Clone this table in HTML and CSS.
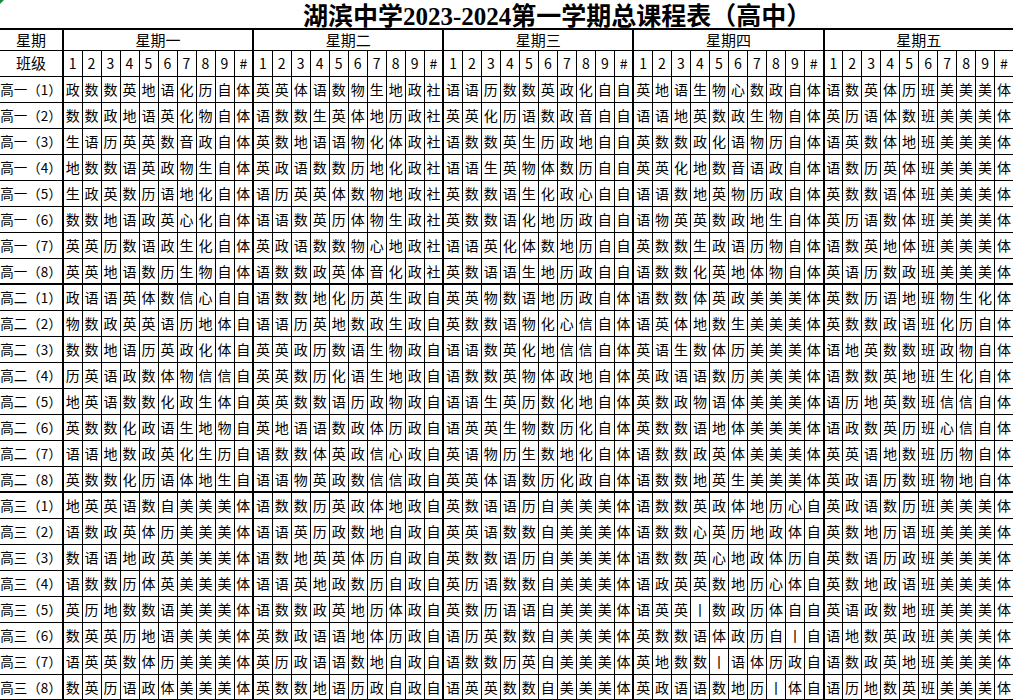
FILE: index.html
```html
<!DOCTYPE html>
<html lang="zh-CN">
<head>
<meta charset="utf-8">
<title>湖滨中学2023-2024第一学期总课程表（高中）</title>
<link rel="stylesheet" href="styles.css">
</head>
<body>
<div class="mark"></div>
<div class="title">湖滨中学2023-2024第一学期总课程表（高中）</div>
<table class="tt">
<colgroup><col class="c0"><col span="50" class="c"></colgroup>
<tr class="h1"><th>星期</th><th colspan="10">星期一</th><th colspan="10">星期二</th><th colspan="10">星期三</th><th colspan="10">星期四</th><th colspan="10">星期五</th></tr>
<tr class="h2"><th class="cls">班级</th>
<th>1<th>2<th>3<th>4<th>5<th>6<th>7<th>8<th>9<th>#
<th>1<th>2<th>3<th>4<th>5<th>6<th>7<th>8<th>9<th>#
<th>1<th>2<th>3<th>4<th>5<th>6<th>7<th>8<th>9<th>#
<th>1<th>2<th>3<th>4<th>5<th>6<th>7<th>8<th>9<th>#
<th>1<th>2<th>3<th>4<th>5<th>6<th>7<th>8<th>9<th>#
</tr>
<tr><th><div class="lab">高一（1）</div></th>
<td>政<td>数<td>数<td>英<td>地<td>语<td>化<td>历<td>自<td>体
<td>英<td>英<td>体<td>语<td>数<td>物<td>生<td>地<td>政<td>社
<td>语<td>语<td>历<td>数<td>数<td>英<td>政<td>化<td>自<td>自
<td>英<td>地<td>语<td>生<td>物<td>心<td>数<td>政<td>自<td>体
<td>语<td>数<td>英<td>体<td>历<td>班<td>美<td>美<td>美<td>体
</tr>
<tr><th><div class="lab">高一（2）</div></th>
<td>数<td>数<td>政<td>地<td>语<td>英<td>化<td>物<td>自<td>体
<td>语<td>数<td>数<td>生<td>英<td>体<td>地<td>历<td>政<td>社
<td>英<td>英<td>化<td>历<td>语<td>数<td>政<td>音<td>自<td>自
<td>语<td>语<td>地<td>英<td>数<td>政<td>生<td>物<td>自<td>体
<td>英<td>历<td>语<td>体<td>数<td>班<td>美<td>美<td>美<td>体
</tr>
<tr><th><div class="lab">高一（3）</div></th>
<td>生<td>语<td>历<td>英<td>英<td>数<td>音<td>政<td>自<td>体
<td>英<td>数<td>地<td>语<td>语<td>物<td>化<td>体<td>政<td>社
<td>语<td>数<td>数<td>英<td>生<td>历<td>政<td>地<td>自<td>自
<td>英<td>数<td>数<td>政<td>化<td>语<td>物<td>历<td>自<td>体
<td>语<td>英<td>数<td>体<td>地<td>班<td>美<td>美<td>美<td>体
</tr>
<tr><th><div class="lab">高一（4）</div></th>
<td>地<td>数<td>数<td>语<td>英<td>政<td>物<td>生<td>自<td>体
<td>英<td>政<td>语<td>数<td>数<td>历<td>地<td>化<td>政<td>社
<td>语<td>语<td>生<td>英<td>物<td>体<td>数<td>历<td>自<td>自
<td>英<td>英<td>化<td>地<td>数<td>音<td>语<td>政<td>自<td>体
<td>语<td>数<td>历<td>英<td>体<td>班<td>美<td>美<td>美<td>体
</tr>
<tr><th><div class="lab">高一（5）</div></th>
<td>生<td>政<td>英<td>数<td>历<td>语<td>地<td>化<td>自<td>体
<td>语<td>历<td>英<td>英<td>体<td>数<td>物<td>地<td>政<td>社
<td>英<td>数<td>数<td>语<td>生<td>化<td>政<td>心<td>自<td>自
<td>语<td>语<td>数<td>地<td>英<td>物<td>历<td>政<td>自<td>体
<td>英<td>数<td>数<td>语<td>体<td>班<td>美<td>美<td>美<td>体
</tr>
<tr><th><div class="lab">高一（6）</div></th>
<td>数<td>数<td>地<td>语<td>政<td>英<td>心<td>化<td>自<td>体
<td>语<td>语<td>数<td>英<td>历<td>体<td>物<td>生<td>政<td>社
<td>英<td>数<td>数<td>语<td>化<td>地<td>历<td>政<td>自<td>自
<td>语<td>物<td>英<td>英<td>数<td>政<td>地<td>生<td>自<td>体
<td>英<td>历<td>语<td>数<td>体<td>班<td>美<td>美<td>美<td>体
</tr>
<tr><th><div class="lab">高一（7）</div></th>
<td>英<td>英<td>历<td>数<td>语<td>政<td>生<td>化<td>自<td>体
<td>英<td>政<td>语<td>数<td>数<td>物<td>心<td>地<td>政<td>社
<td>语<td>语<td>英<td>化<td>体<td>数<td>地<td>历<td>自<td>自
<td>英<td>数<td>数<td>生<td>政<td>语<td>历<td>物<td>自<td>体
<td>语<td>数<td>英<td>地<td>体<td>班<td>美<td>美<td>美<td>体
</tr>
<tr><th><div class="lab">高一（8）</div></th>
<td>英<td>英<td>地<td>语<td>数<td>历<td>生<td>物<td>自<td>体
<td>语<td>数<td>数<td>政<td>英<td>体<td>音<td>化<td>政<td>社
<td>英<td>数<td>语<td>语<td>生<td>地<td>历<td>政<td>自<td>自
<td>语<td>数<td>数<td>化<td>英<td>地<td>体<td>物<td>自<td>体
<td>英<td>语<td>历<td>数<td>政<td>班<td>美<td>美<td>美<td>体
</tr>
<tr class="g"><th><div class="lab">高二（1）</div></th>
<td>政<td>语<td>语<td>英<td>体<td>数<td>信<td>心<td>自<td>自
<td>语<td>数<td>数<td>地<td>化<td>历<td>英<td>生<td>政<td>自
<td>英<td>英<td>物<td>数<td>语<td>地<td>历<td>政<td>自<td>体
<td>语<td>数<td>数<td>体<td>英<td>政<td>美<td>美<td>美<td>体
<td>英<td>数<td>历<td>语<td>地<td>班<td>物<td>生<td>化<td>体
</tr>
<tr><th><div class="lab">高二（2）</div></th>
<td>物<td>数<td>政<td>英<td>英<td>语<td>历<td>地<td>体<td>自
<td>语<td>语<td>历<td>英<td>地<td>数<td>政<td>生<td>政<td>自
<td>英<td>数<td>数<td>语<td>物<td>化<td>心<td>信<td>自<td>体
<td>语<td>英<td>体<td>地<td>数<td>生<td>美<td>美<td>美<td>体
<td>英<td>数<td>数<td>政<td>语<td>班<td>化<td>历<td>自<td>体
</tr>
<tr><th><div class="lab">高二（3）</div></th>
<td>数<td>数<td>地<td>语<td>历<td>英<td>政<td>化<td>体<td>自
<td>英<td>英<td>政<td>历<td>数<td>语<td>生<td>物<td>政<td>自
<td>语<td>语<td>数<td>英<td>化<td>地<td>信<td>信<td>自<td>体
<td>英<td>语<td>生<td>数<td>体<td>历<td>美<td>美<td>美<td>体
<td>语<td>地<td>英<td>数<td>数<td>班<td>政<td>物<td>自<td>体
</tr>
<tr><th><div class="lab">高二（4）</div></th>
<td>历<td>英<td>语<td>政<td>数<td>体<td>物<td>信<td>信<td>自
<td>英<td>英<td>数<td>历<td>化<td>语<td>生<td>地<td>政<td>自
<td>语<td>数<td>数<td>英<td>物<td>体<td>政<td>地<td>自<td>体
<td>英<td>政<td>语<td>语<td>数<td>历<td>美<td>美<td>美<td>体
<td>语<td>数<td>数<td>英<td>地<td>班<td>生<td>化<td>自<td>体
</tr>
<tr><th><div class="lab">高二（5）</div></th>
<td>地<td>英<td>语<td>数<td>数<td>化<td>政<td>生<td>体<td>自
<td>英<td>英<td>数<td>数<td>语<td>历<td>政<td>物<td>政<td>自
<td>语<td>语<td>生<td>英<td>历<td>数<td>化<td>地<td>自<td>体
<td>英<td>数<td>政<td>物<td>语<td>体<td>美<td>美<td>美<td>体
<td>语<td>历<td>地<td>英<td>数<td>班<td>信<td>信<td>自<td>体
</tr>
<tr><th><div class="lab">高二（6）</div></th>
<td>英<td>数<td>数<td>化<td>政<td>语<td>生<td>地<td>物<td>自
<td>英<td>地<td>语<td>语<td>数<td>政<td>体<td>历<td>政<td>自
<td>语<td>英<td>英<td>生<td>物<td>数<td>历<td>化<td>自<td>体
<td>英<td>数<td>数<td>语<td>地<td>体<td>美<td>美<td>美<td>体
<td>语<td>政<td>数<td>英<td>历<td>班<td>心<td>信<td>自<td>体
</tr>
<tr><th><div class="lab">高二（7）</div></th>
<td>语<td>语<td>地<td>数<td>政<td>英<td>化<td>生<td>历<td>自
<td>语<td>数<td>数<td>体<td>英<td>政<td>信<td>心<td>政<td>自
<td>英<td>语<td>物<td>历<td>生<td>数<td>地<td>化<td>自<td>体
<td>语<td>数<td>数<td>政<td>英<td>体<td>美<td>美<td>美<td>体
<td>英<td>英<td>语<td>地<td>数<td>班<td>历<td>物<td>自<td>体
</tr>
<tr><th><div class="lab">高二（8）</div></th>
<td>英<td>数<td>数<td>化<td>历<td>语<td>体<td>地<td>生<td>自
<td>语<td>语<td>物<td>英<td>政<td>数<td>信<td>信<td>政<td>自
<td>英<td>英<td>体<td>语<td>数<td>历<td>化<td>政<td>自<td>体
<td>语<td>数<td>数<td>地<td>英<td>生<td>美<td>美<td>美<td>体
<td>英<td>政<td>语<td>历<td>数<td>班<td>物<td>地<td>自<td>体
</tr>
<tr class="g"><th><div class="lab">高三（1）</div></th>
<td>地<td>英<td>英<td>语<td>数<td>自<td>美<td>美<td>美<td>体
<td>语<td>数<td>数<td>历<td>英<td>政<td>体<td>地<td>政<td>自
<td>英<td>数<td>语<td>语<td>历<td>自<td>美<td>美<td>美<td>体
<td>语<td>数<td>数<td>英<td>政<td>体<td>地<td>历<td>心<td>自
<td>英<td>政<td>语<td>数<td>历<td>班<td>美<td>美<td>美<td>体
</tr>
<tr><th><div class="lab">高三（2）</div></th>
<td>语<td>数<td>政<td>英<td>体<td>历<td>美<td>美<td>美<td>体
<td>语<td>语<td>英<td>历<td>政<td>数<td>地<td>自<td>政<td>自
<td>英<td>英<td>语<td>数<td>数<td>自<td>美<td>美<td>美<td>体
<td>语<td>数<td>数<td>心<td>英<td>历<td>地<td>政<td>体<td>自
<td>英<td>数<td>地<td>历<td>语<td>班<td>美<td>美<td>美<td>体
</tr>
<tr><th><div class="lab">高三（3）</div></th>
<td>数<td>语<td>语<td>地<td>政<td>英<td>美<td>美<td>美<td>体
<td>语<td>数<td>地<td>英<td>英<td>体<td>历<td>自<td>政<td>自
<td>英<td>数<td>数<td>语<td>历<td>自<td>美<td>美<td>美<td>体
<td>语<td>数<td>数<td>英<td>心<td>地<td>政<td>体<td>历<td>自
<td>英<td>数<td>语<td>历<td>政<td>班<td>美<td>美<td>美<td>体
</tr>
<tr><th><div class="lab">高三（4）</div></th>
<td>语<td>数<td>数<td>历<td>体<td>英<td>美<td>美<td>美<td>体
<td>语<td>语<td>英<td>地<td>政<td>数<td>历<td>自<td>政<td>自
<td>英<td>历<td>语<td>数<td>数<td>自<td>美<td>美<td>美<td>体
<td>语<td>政<td>英<td>英<td>数<td>地<td>历<td>心<td>体<td>自
<td>英<td>数<td>地<td>政<td>语<td>班<td>美<td>美<td>美<td>体
</tr>
<tr><th><div class="lab">高三（5）</div></th>
<td>英<td>历<td>地<td>数<td>数<td>语<td>美<td>美<td>美<td>体
<td>语<td>数<td>数<td>政<td>英<td>地<td>历<td>体<td>政<td>自
<td>英<td>数<td>历<td>语<td>语<td>自<td>美<td>美<td>美<td>体
<td>语<td>英<td>英<td>丨<td>数<td>政<td>历<td>体<td>自<td>自
<td>英<td>语<td>政<td>数<td>地<td>班<td>美<td>美<td>美<td>体
</tr>
<tr><th><div class="lab">高三（6）</div></th>
<td>数<td>英<td>英<td>历<td>地<td>语<td>美<td>美<td>美<td>体
<td>英<td>数<td>政<td>语<td>语<td>地<td>体<td>历<td>政<td>自
<td>语<td>历<td>英<td>数<td>数<td>自<td>美<td>美<td>美<td>体
<td>英<td>数<td>数<td>语<td>体<td>政<td>历<td>自<td>丨<td>自
<td>语<td>地<td>数<td>英<td>政<td>班<td>美<td>美<td>美<td>体
</tr>
<tr><th><div class="lab">高三（7）</div></th>
<td>语<td>英<td>英<td>数<td>体<td>历<td>美<td>美<td>美<td>体
<td>英<td>历<td>政<td>语<td>语<td>数<td>地<td>自<td>政<td>自
<td>语<td>数<td>数<td>历<td>英<td>自<td>美<td>美<td>美<td>体
<td>英<td>地<td>数<td>数<td>丨<td>语<td>体<td>历<td>政<td>自
<td>语<td>数<td>政<td>英<td>地<td>班<td>美<td>美<td>美<td>体
</tr>
<tr><th><div class="lab">高三（8）</div></th>
<td>数<td>英<td>历<td>语<td>政<td>体<td>美<td>美<td>美<td>体
<td>英<td>数<td>数<td>地<td>语<td>历<td>政<td>自<td>政<td>自
<td>语<td>英<td>英<td>数<td>数<td>自<td>美<td>美<td>美<td>体
<td>英<td>政<td>语<td>语<td>数<td>地<td>历<td>丨<td>体<td>自
<td>语<td>历<td>地<td>数<td>英<td>班<td>美<td>美<td>美<td>体
</tr>
</table>
</body>
</html>
```
FILE: styles.css
```css
html, body {
  margin: 0;
  padding: 0;
  background: #fff;
  overflow: hidden;
}
body {
  font-family: "Noto Sans CJK SC", sans-serif;
  color: #000;
}
.mark {
  position: fixed;
  left: 0;
  top: 0;
  width: 0;
  height: 0;
  border-top: 4px solid #1e8a3a;
  border-right: 4px solid transparent;
}
.title {
  height: 28px;
  padding-left: 303px;
  font-family: "Liberation Serif", "Noto Sans CJK SC", serif;
  font-weight: bold;
  font-size: 25px;
  line-height: 33px;
  white-space: nowrap;
}
.tt {
  border-collapse: collapse;
  table-layout: fixed;
  width: 1013px;
}
.c0 { width: 63px; }
.c { width: 19px; }
.tt td, .tt th {
  border: 1px solid #000;
  padding: 0;
  text-align: center;
  font-weight: normal;
  font-size: 14px;
  line-height: 18px;
  white-space: nowrap;
  overflow: hidden;
}
.tt tr { height: 26px; }
.tt tr.h1 { height: 21px; }
.tt tr.h1 th {
  border-top: 2px solid #000;
  border-left: 2px solid #000;
  font-size: 15px;
}
.tt tr.h1 th:first-child { border-left: none; }
.tt tr.h2 th { font-size: 14px; }
.tt tr.h2 th.cls { font-size: 15px; }
.tt th:first-child { border-left: none; }
.tt td:nth-child(10n+2),
.tt tr.h2 th:nth-child(10n+2) {
  border-left: 2px solid #000;
}
.tt tr.g td, .tt tr.g th {
  border-top: 2px solid #000;
}
.tt tr:last-child td, .tt tr:last-child th {
  border-bottom: 2px solid #000;
}
.tt td:last-child, .tt th:last-child { border-right: 2px solid #000; }
.lab {
  display: flex;
  justify-content: center;
  font-size: 13.5px;
  white-space: nowrap;
}
```
